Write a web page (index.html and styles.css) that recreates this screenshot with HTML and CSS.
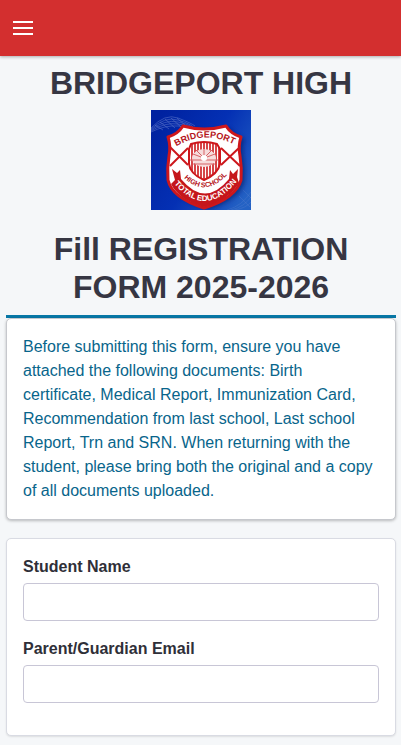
FILE: index.html
```
<!DOCTYPE html>
<html lang="en">
<head>
<meta charset="UTF-8">
<meta name="viewport" content="width=device-width, initial-scale=1">
<title>Bridgeport High - Registration Form</title>
<link rel="stylesheet" href="styles.css">
</head>
<body>

<header class="navbar">
  <button type="button" class="menu-btn" aria-label="Open menu">
    <svg width="20" height="14" viewBox="0 0 20 14" aria-hidden="true">
      <path d="M0 0h20v2H0zM0 6h20v2H0zM0 12h20v2H0z" fill="#fff"/>
    </svg>
  </button>
</header>

<main class="page">
  <h1 class="title">BRIDGEPORT HIGH</h1>

  <!-- School crest -->
  <svg class="crest" viewBox="0 0 100 100" role="img" aria-label="Bridgeport High School crest">
    <defs>
      <linearGradient id="sky" x1="0" y1="0.2" x2="1" y2="0.8">
        <stop offset="0" stop-color="#0022a0"/>
        <stop offset="0.5" stop-color="#0430b4"/>
        <stop offset="1" stop-color="#2462c4"/>
      </linearGradient>
      <filter id="soft" x="-20%" y="-20%" width="140%" height="140%">
        <feGaussianBlur stdDeviation="2"/>
      </filter>
      <path id="arc-top" d="M26 36Q53 20 82 34"/>
      <path id="arc-mid" d="M32 67Q54 89 77 64"/>
      <path id="arc-low" d="M21 71Q54 112 88 69"/>
      <path id="shield" d="M32 16Q53 22 75 16Q80 24 90 27Q87 36 89 46Q91 58 90 70Q85 88 53 98Q21 88 17 70Q16 58 18 46Q20 36 17 27Q27 24 32 16Z"/>
      <path id="inner" d="M40 34Q53 30 66 34L69 39V54Q67 64 53 70Q39 64 38 54V39Z"/>
      <clipPath id="inner-clip"><use href="#inner"/></clipPath>
    </defs>
    <rect width="100" height="100" fill="url(#sky)"/>
    <g fill="none" stroke="#8fa3e0" stroke-width="0.5" opacity="0.7">
      <path d="M0 18Q14 3 27 8T44 16"/>
      <path d="M0 19Q14 6 27 10T42 17"/>
      <path d="M0 20Q14 9 27 12T40 17"/>
      <path d="M0 21Q14 12 27 14T38 17"/>
      <path d="M0 22Q14 15 27 16T36 17"/>
      <path d="M4 15L12 20M9 12L18 19M14 9L24 18M20 8L30 17M26 8L35 16"/>
    </g>
    <g fill="none" stroke="#5d84d0" stroke-width="0.5" opacity="0.6">
      <path d="M76 100Q91 96 100 82M80 100Q93 97 100 87M84 100Q95 98 100 92M92 80L100 88M88 86L99 97"/>
    </g>
    <use href="#shield" x="4" y="2" fill="#001258" opacity="0.5" filter="url(#soft)"/>
    <use href="#shield" fill="#fff" stroke="#cd171c" stroke-width="3" stroke-linejoin="round"/>
    <path d="M19 37L37 55M37 38L19 56M70 38L89 56M89 37L70 55" stroke="#cd171c" stroke-width="2"/>
    <!-- Striped inner shield with the rising sun -->
    <g clip-path="url(#inner-clip)">
      <rect x="36" y="28" width="36" height="44" fill="#fff"/>
      <path d="M41 28v44M44 28v44M47 28v44M50 28v44M53 28v44M56 28v44M59 28v44M62 28v44M65 28v44M68 28v44" stroke="#cf2529" stroke-width="1.7"/>
      <ellipse cx="53" cy="48" rx="12" ry="9" fill="#f6dcdc"/>
      <path d="M42 44l8 3M45 40l6 6M53 39v7M61 40l-6 6M64 44l-8 3M39 50h28M42 54h22" stroke="#d66266" stroke-width="1"/>
      <circle cx="53" cy="48" r="3" fill="#fff"/>
    </g>
    <use href="#inner" fill="none" stroke="#cd171c" stroke-width="2"/>
    <!-- Ribbon -->
    <path d="M21 59L26 63L29 60L30 69Q54 98 78 69L79 60L82 64L87 59L86 67L88 73Q78 90 53 97Q28 90 20 74L24 70Z" fill="#c5161b"/>
    <g class="crest-text">
      <text fill="#b5151a" font-size="9"><textPath href="#arc-top" startOffset="50%" text-anchor="middle">BRIDGEPORT</textPath></text>
      <text fill="#b5151a" font-size="7"><textPath href="#arc-mid" startOffset="50%" text-anchor="middle">HIGH SCHOOL</textPath></text>
      <text fill="#fff" font-size="8"><textPath href="#arc-low" startOffset="50%" text-anchor="middle">TOTAL EDUCATION</textPath></text>
    </g>
  </svg>

  <h1 class="title form-title">Fill REGISTRATION FORM 2025-2026</h1>

  <section class="notice">
    <p class="card notice-text">Before submitting this form, ensure you have attached the following documents: Birth certificate, Medical Report, Immunization Card, Recommendation from last school, Last school Report, Trn and SRN. When returning with the student, please bring both the original and a copy of all documents uploaded.</p>
  </section>

  <form class="card">
    <div class="form-group">
      <label for="student-name">Student Name</label>
      <input type="text" id="student-name" name="student_name">
    </div>
    <div class="form-group">
      <label for="parent-email">Parent/Guardian Email</label>
      <input type="email" id="parent-email" name="parent_email">
    </div>
  </form>
</main>

</body>
</html>
```
FILE: styles.css
```
* {
  box-sizing: border-box;
}

body {
  margin: 0;
  background: #f5f7f9;
  color: #363643;
  font-family: "Liberation Sans", Arial, sans-serif;
  font-size: 16px;
  line-height: 24px;
}

/* Top bar */
.navbar {
  display: flex;
  align-items: center;
  height: 56px;
  padding: 0 13px;
  background: #d32f2f;
  box-shadow: 0 1px 3px rgba(0, 0, 0, 0.3);
}

.menu-btn {
  display: flex;
  padding: 0;
  border: 0;
  background: none;
  cursor: pointer;
}

/* Page */
.page {
  padding: 8px 5px 8px 6px;
}

.title {
  margin: 0 0 8px;
  font-size: 32px;
  line-height: 38px;
  font-weight: bold;
  text-align: center;
}

.form-title {
  margin: 20px 0 9px;
  padding: 0 24px;
}

.crest {
  display: block;
  width: 100px;
  height: 100px;
  margin: 0 auto;
}

.crest-text {
  font-family: "Liberation Sans", Arial, sans-serif;
  font-weight: bold;
}

.card {
  margin: 0;
  padding: 16px;
  background: #fff;
  border: 1px solid #d9dbe3;
  border-radius: 5px;
  box-shadow: 0 1px 2px rgba(0, 0, 0, 0.1);
}

.notice {
  margin-bottom: 18px;
  border-top: 3px solid #0877a6;
}

.notice-text {
  color: #08658b;
  border-color: #c6c8cd;
  box-shadow: 0 1px 3px rgba(0, 0, 0, 0.25);
}

/* Form */
.form-group {
  margin-bottom: 16px;
}

.form-group label {
  display: block;
  margin-bottom: 4px;
  color: #2f2f38;
  font-weight: bold;
}

.form-group input {
  display: block;
  width: 100%;
  height: 38px;
  padding: 6px 12px;
  border: 1px solid #c8c6d6;
  border-radius: 4px;
  background: #fff;
  color: inherit;
  font: inherit;
}
```
